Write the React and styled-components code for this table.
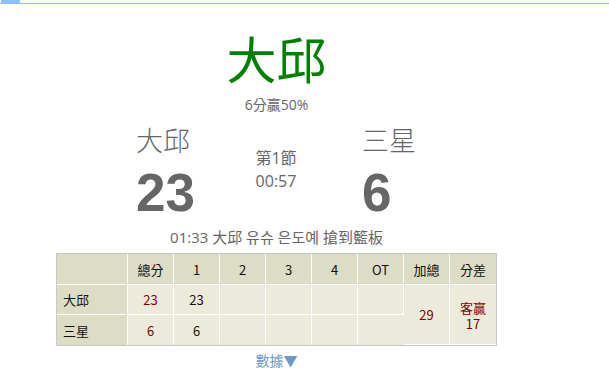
import React from "react";
import styled, { createGlobalStyle } from "styled-components";

const Global = createGlobalStyle`
  html, body { margin: 0; padding: 0; background: #fff; }
  body { font-family: "Liberation Sans", "Noto Sans CJK TC", sans-serif; }
  * { box-sizing: border-box; }
`;

const TopBar = styled.div`
  height: 4px;
  border-bottom: 1px solid #8fbfef;
  display: flex;
`;

const TopTab = styled.div`
  width: 19px;
  height: 3px;
  margin-left: 1px;
  background: #8fc1fb;
`;

const Page = styled.div`
  width: 441px;
  margin-left: 56px;
  display: flex;
  flex-direction: column;
  align-items: center;
  font-family: "Liberation Sans", "Noto Sans CJK TC", sans-serif;
`;

const Winner = styled.div`
  margin-top: 21px;
  font-family: "Noto Sans CJK TC", sans-serif;
  font-size: 50px;
  line-height: 64px;
  color: #008000;
`;

const Margin = styled.div`
  margin-top: 7px;
  font-family: "Open Sans", "Noto Sans CJK TC", sans-serif;
  font-size: 14px;
  line-height: 18px;
  color: #666;
`;

const ScoreRow = styled.div`
  display: flex;
  width: 100%;
  margin-top: 9px;
`;

const TeamCol = styled.div`
  width: ${(p) => p.$w}px;
  padding-left: ${(p) => p.$pl}px;
  display: flex;
  flex-direction: column;
  align-items: flex-start;
`;

const TeamName = styled.div`
  font-family: "Noto Sans CJK TC", sans-serif;
  font-weight: 300;
  font-size: 27px;
  line-height: 34px;
  color: #666;
`;

const BigScore = styled.div`
  margin-top: 8px;
  font-family: "Liberation Sans", sans-serif;
  font-weight: bold;
  font-size: 53px;
  line-height: 56px;
  color: #666;
`;

const Clock = styled.div`
  width: ${(p) => p.$w}px;
  padding-top: 24px;
  display: flex;
  flex-direction: column;
  align-items: center;
  font-family: "Open Sans", "Noto Sans CJK TC", sans-serif;
  font-size: 16px;
  line-height: 23px;
  color: #666;
`;

const Play = styled.div`
  margin-top: 6px;
  font-family: "Open Sans", "Noto Sans CJK TC", "Noto Sans CJK KR", sans-serif;
  font-size: 15px;
  line-height: 20px;
  color: #666;
`;

const Table = styled.table`
  margin-top: 6px;
  width: 441px;
  table-layout: fixed;
  border: 1px solid #c8c8c8;
  border-collapse: separate;
  border-spacing: 0;
  font-family: "Noto Sans CJK TC", sans-serif;
  font-size: 13px;
  color: #111;
`;

const Cell = styled.td`
  width: ${(p) => p.$w || 46}px;
  height: ${(p) => p.$h || 30}px;
  padding: 0;
  border-right: 1px solid #fff;
  border-bottom: 1px solid #fff;
  &:last-child { border-right: none; }
  background: ${(p) => (p.$head ? "#dddcc4" : "#ecebdb")};
  text-align: ${(p) => (p.$left ? "left" : "center")};
  padding-left: ${(p) => (p.$left ? 6 : 0)}px;
  padding-top: ${(p) => (p.$span ? 2 : 0)}px;
  color: ${(p) => (p.$red ? "#880000" : "#111")};
  line-height: 17px;
  vertical-align: middle;
`;

const Line = styled.div`
  font-size: 13px;
  line-height: 16px;
`;

const Row = styled.tr`
  &:last-child td { border-bottom: none; }
`;

const More = styled.div`
  margin-top: 5px;
  font-family: "Noto Sans CJK TC", sans-serif;
  font-size: 14px;
  line-height: 18px;
  color: #6f9ac3;
`;

const cols = ["總分", "1", "2", "3", "4", "OT", "加總", "分差"];

export default function App() {
  return (
    <>
      <Global />
      <TopBar>
        <TopTab />
      </TopBar>
      <Page>
        <Winner>大邱</Winner>
        <Margin>6分贏50%</Margin>
        <ScoreRow>
          <TeamCol $w={180} $pl={80}>
            <TeamName>大邱</TeamName>
            <BigScore>23</BigScore>
          </TeamCol>
          <Clock $w={80}>
            <div>第1節</div>
            <div>00:57</div>
          </Clock>
          <TeamCol $w={181} $pl={46}>
            <TeamName>三星</TeamName>
            <BigScore>6</BigScore>
          </TeamCol>
        </ScoreRow>
        <Play>01:33 大邱 유슈 은도예 搶到籃板</Play>
        <Table>
          <tbody>
            <Row>
              <Cell $head $w={71} $h={31} />
              {cols.map((c) => (
                <Cell key={c} $head $h={31}>{c}</Cell>
              ))}
            </Row>
            <Row>
              <Cell $head $left $w={71}>大邱</Cell>
              <Cell $red>23</Cell>
              <Cell>23</Cell>
              <Cell />
              <Cell />
              <Cell />
              <Cell />
              <Cell rowSpan={2} $red>29</Cell>
              <Cell rowSpan={2} $red $span>
                <Line>客贏</Line>
                <Line>17</Line>
              </Cell>
            </Row>
            <Row>
              <Cell $head $left $w={71}>三星</Cell>
              <Cell $red>6</Cell>
              <Cell>6</Cell>
              <Cell />
              <Cell />
              <Cell />
              <Cell />
            </Row>
          </tbody>
        </Table>
        <More>數據▼</More>
      </Page>
    </>
  );
}
